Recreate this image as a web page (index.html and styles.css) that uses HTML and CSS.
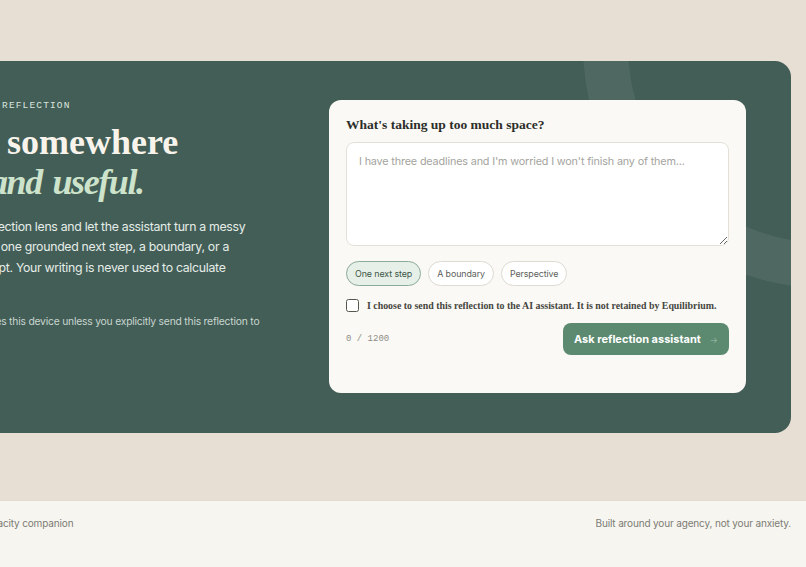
FILE: index.html
```html
<!DOCTYPE html>
<html lang="en">
<head>
<meta charset="utf-8">
<title>Equilibrium — Reflection</title>
<link rel="stylesheet" href="styles.css">
</head>
<body>
<div class="page">
  <main class="container main">
    <section class="reflect">
      <div class="ring" aria-hidden="true"></div>
      <div class="intro">
        <p class="eyebrow">ON-DEMAND AI REFLECTION</p>
        <h1 class="title">Put it somewhere<br><em>calm and useful.</em></h1>
        <p class="lead">Choose the reflection lens and let the assistant turn a messy<br>raw feeling into one grounded next step, a boundary, or a<br>reframing prompt. Your writing is never used to calculate<br>your score.</p>
        <p class="note">All text never leaves this device unless you explicitly send this reflection to<br>the AI assistant.</p>
      </div>
      <form class="card">
        <label class="card-title" for="thought">What's taking up too much space?</label>
        <textarea id="thought" class="field" placeholder="I have three deadlines and I'm worried I won't finish any of them..."></textarea>
        <div class="chips">
          <button type="button" class="chip chip-on">One next step</button>
          <button type="button" class="chip">A boundary</button>
          <button type="button" class="chip">Perspective</button>
        </div>
        <label class="consent"><span class="box"></span><span>I choose to send this reflection to the AI assistant. It is not retained by Equilibrium.</span></label>
        <div class="actions">
          <span class="count">0 / 1200</span>
          <button type="button" class="ask">Ask reflection assistant <span class="arrow">→</span></button>
        </div>
      </form>
    </section>
  </main>
  <footer class="footer">
    <div class="container foot-row">
      <span>Equilibrium — a gentle capacity companion</span>
      <span>Built around your agency, not your anxiety.</span>
    </div>
  </footer>
</div>
</body>
</html>
```
FILE: styles.css
```css
* { box-sizing: border-box; }
html, body { margin: 0; padding: 0; }
body {
  background: #e8dfd4;
  font-family: "Inter", "Noto Sans", sans-serif;
  overflow: hidden;
  height: 567px;
}
.page { display: flex; flex-direction: column; height: 567px; }
.container { width: 916px; margin-left: -125px; }
.main { padding-top: 61px; padding-bottom: 67px; }
.reflect {
  position: relative;
  overflow: hidden;
  background: #425e57;
  border-radius: 16px;
  display: flex;
  align-items: flex-start;
  justify-content: space-between;
  padding: 39px 45px 40px 38px;
}
.ring {
  position: absolute;
  width: 484px;
  height: 484px;
  right: -276px;
  top: -257px;
  border-radius: 50%;
  border: 45px solid rgba(255,255,255,0.07);
}
.intro { position: relative; width: 380px; }
.eyebrow {
  margin: 0 0 10px;
  font-family: "Liberation Mono", monospace;
  font-size: 9.5px;
  line-height: 12px;
  letter-spacing: 1.15px;
  color: #d9e4dd;
}
.title {
  margin: 0;
  font-family: "Liberation Serif", serif;
  font-weight: 700;
  font-size: 36px;
  line-height: 40px;
  color: #f8f4ec;
}
.title em { font-style: italic; color: #cde3cb; letter-spacing: -1.4px; word-spacing: 3px; }
.lead {
  margin: 15px 0 0;
  font-size: 12.3px;
  line-height: 20.3px;
  letter-spacing: -0.3px;
  color: #e6ede8;
}
.note {
  margin: 16px 0 0;
  font-size: 10.3px;
  line-height: 15px;
  letter-spacing: -0.2px;
  color: #c9d5cf;
}
.card {
  position: relative;
  width: 417px;
  background: #fbf9f5;
  border-radius: 12px;
  padding: 17px 17px 38px;
  display: flex;
  flex-direction: column;
}
.card-title {
  font-family: "Liberation Serif", serif;
  font-weight: 700;
  font-size: 13.5px;
  line-height: 16px;
  color: #2b2e2a;
}
.field {
  margin-top: 9px;
  height: 104px;
  width: 100%;
  border: 1px solid #e4e0d8;
  border-radius: 8px;
  background: #fff;
  padding: 12px 12px;
  font-family: "Inter", "Noto Sans", sans-serif;
  font-size: 10.8px;
  letter-spacing: -0.15px;
  color: #333;
  resize: vertical;
}
.field::placeholder { color: #a4a49e; }
.chips { display: flex; gap: 7px; margin-top: 15px; }
.chip {
  height: 25px;
  padding: 0 8px;
  border: 1px solid #dedad2;
  border-radius: 999px;
  background: #fff;
  font-family: "Inter", "Noto Sans", sans-serif;
  font-size: 8.9px;
  letter-spacing: -0.1px;
  color: #5d605b;
}
.chip-on { background: #e7f0e8; border-color: #8aab96; color: #3d5649; }
.consent {
  display: flex;
  align-items: center;
  gap: 8px;
  margin-top: 13px;
  font-family: "Liberation Serif", serif;
  font-weight: 700;
  font-size: 9.9px;
  color: #45463f;
}
.box {
  width: 13px;
  height: 13px;
  border: 1.3px solid #55574f;
  border-radius: 2.5px;
  background: #fff;
  flex: none;
}
.actions {
  display: flex;
  align-items: center;
  justify-content: space-between;
  margin-top: 11px;
}
.count {
  font-family: "Liberation Mono", monospace;
  font-size: 9px;
  color: #8d8d86;
}
.ask {
  width: 166px;
  height: 32px;
  border: none;
  border-radius: 8px;
  background: #5b8a70;
  color: #fff;
  font-family: "Inter", "Noto Sans", sans-serif;
  font-weight: 700;
  font-size: 11px;
  text-align: left;
  padding: 0 11px 0 11px;
  display: flex;
  align-items: center;
  justify-content: space-between;
}
.arrow { color: rgba(255,255,255,0.35); font-weight: 400; font-size: 9px; }
.footer {
  flex: 1;
  background: #f7f5ef;
  border-top: 1px solid #e2dacf;
}
.foot-row {
  display: flex;
  justify-content: space-between;
  padding-top: 15px;
  font-size: 10px;
  line-height: 14px;
  letter-spacing: -0.15px;
  color: #7b7c75;
}
```
